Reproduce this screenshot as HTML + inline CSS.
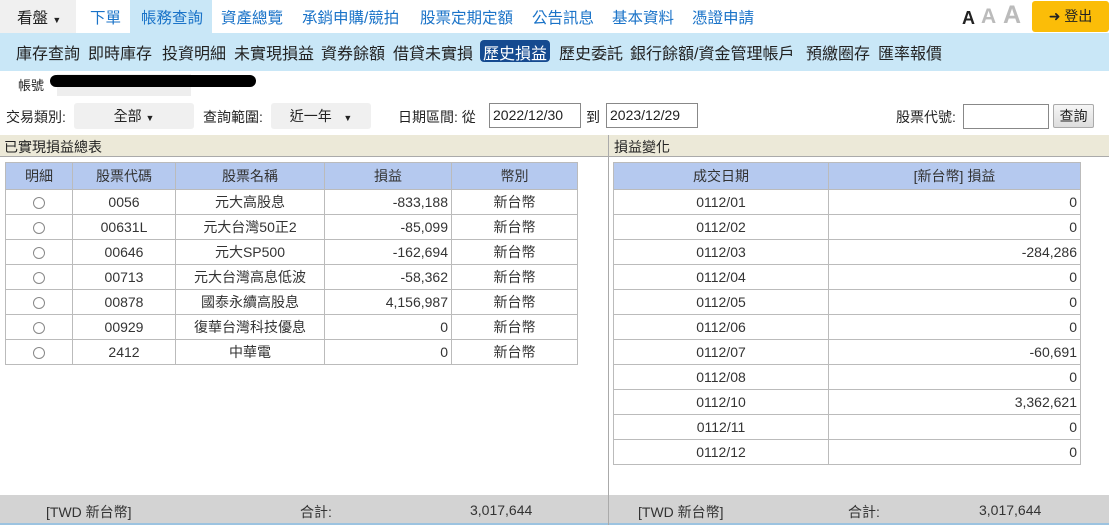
<!DOCTYPE html>
<html><head><meta charset="utf-8"><style>
*{box-sizing:border-box;margin:0;padding:0}
body{width:1109px;height:527px;overflow:hidden;background:#fff;font-family:"Liberation Sans","Noto Sans CJK TC",sans-serif;font-size:14px;color:#222;position:relative}
.a{position:absolute;white-space:nowrap}
.n{position:absolute;top:6px;font-size:15.5px;color:#1a73c8;white-space:nowrap}
.s{position:absolute;top:40px;font-size:16px;color:#222;white-space:nowrap}
table{border-collapse:collapse;position:absolute;font-size:14px;color:#333}
td,th{border:1px solid #bbb;height:25px;padding:0 3px;text-align:center;font-weight:normal}
th{background:#b5c9ef;color:#333;height:27px}
td.r{text-align:right}
.sel{background:#f0f0f0;border-radius:3px;height:26px;text-align:center;line-height:26px}
.inp{border:1px solid #888;height:25px;background:#fff;padding:0 3px;line-height:23px;font-size:14px}
.rad{display:inline-block;width:12px;height:12px;border:1px solid #888;border-radius:50%;vertical-align:middle}
</style></head><body>
<div class="a" style="left:0;top:0;width:76px;height:33px;background:#f0f0f0"></div>
<div class="a" style="left:130px;top:0;width:82px;height:33px;background:#c9e7f7"></div>
<div class="a" style="left:17px;top:6px;font-size:15.5px">看盤 <span style="font-size:9px">▼</span></div>
<div class="n" style="left:90px">下單</div>
<div class="n" style="left:141px">帳務查詢</div>
<div class="n" style="left:221px">資產總覽</div>
<div class="n" style="left:302px">承銷申購/競拍</div>
<div class="n" style="left:420px">股票定期定額</div>
<div class="n" style="left:532px">公告訊息</div>
<div class="n" style="left:612px">基本資料</div>
<div class="n" style="left:692px">憑證申請</div>
<div class="a" style="left:962px;top:8px;font-weight:bold;font-size:18px">A</div>
<div class="a" style="left:981px;top:5px;font-weight:bold;font-size:21px;color:#bbb">A</div>
<div class="a" style="left:1003px;top:1px;font-weight:bold;font-size:25px;color:#bbb">A</div>
<div class="a" style="left:1032px;top:1px;width:77px;height:31px;background:#fbbd08;border-radius:3px;text-align:center;line-height:31px;font-size:14px">➜ 登出</div>
<div class="a" style="left:0;top:33px;width:1109px;height:38px;background:#c9e7f7"></div>
<div class="s" style="left:16px">庫存查詢</div>
<div class="s" style="left:88px">即時庫存</div>
<div class="s" style="left:162px">投資明細</div>
<div class="s" style="left:234px">未實現損益</div>
<div class="s" style="left:321px">資券餘額</div>
<div class="s" style="left:393px">借貸未實損</div>
<div class="a" style="left:480px;top:40px;width:70px;height:22px;background:#154a90;border-radius:4px"></div>
<div class="s" style="left:483px;color:#fff">歷史損益</div>
<div class="s" style="left:559px">歷史委託</div>
<div class="s" style="left:630px">銀行餘額/資金管理帳戶</div>
<div class="s" style="left:806px">預繳圈存</div>
<div class="s" style="left:878px">匯率報價</div>
<div class="a" style="left:57px;top:74px;width:134px;height:22px;background:#eee"></div>
<div class="a" style="left:18px;top:75px;font-size:13px">帳號</div>
<div class="a" style="left:50px;top:75px;width:206px;height:12px;background:#000;border-radius:6px"></div>
<div class="a" style="left:6px;top:107px">交易類別:</div>
<div class="a sel" style="left:74px;top:103px;width:120px">全部 <span style="font-size:9px">▼</span></div>
<div class="a" style="left:203px;top:107px">查詢範圍:</div>
<div class="a sel" style="left:271px;top:103px;width:100px">近一年 &nbsp;&nbsp;<span style="font-size:9px">▼</span></div>
<div class="a" style="left:398px;top:107px">日期區間: 從</div>
<div class="a inp" style="left:489px;top:103px;width:92px;overflow:hidden">2022/12/30</div>
<div class="a" style="left:586px;top:107px">到</div>
<div class="a inp" style="left:606px;top:103px;width:92px;overflow:hidden">2023/12/29</div>
<div class="a" style="left:896px;top:107px">股票代號:</div>
<div class="a inp" style="left:963px;top:104px;width:86px"></div>
<div class="a" style="left:1053px;top:104px;width:41px;height:24px;border:1px solid #aaa;background:linear-gradient(#f6f6f6,#ddd);border-radius:2px;text-align:center;line-height:22px">查詢</div>
<div class="a" style="left:0;top:135px;width:1109px;height:22px;background:#ece9d8;border-bottom:1px solid #aaa"></div>
<div class="a" style="left:4px;top:137px">已實現損益總表</div>
<div class="a" style="left:614px;top:137px">損益變化</div>
<div class="a" style="left:608px;top:135px;width:1px;height:390px;background:#aaa"></div>
<table style="left:5px;top:162px;width:573px">
<tr><th style="width:67px">明細</th><th style="width:103px">股票代碼</th><th style="width:149px">股票名稱</th><th style="width:127px">損益</th><th>幣別</th></tr>
<tr><td><span class="rad"></span></td><td>0056</td><td>元大高股息</td><td class="r">-833,188</td><td>新台幣</td></tr>
<tr><td><span class="rad"></span></td><td>00631L</td><td>元大台灣50正2</td><td class="r">-85,099</td><td>新台幣</td></tr>
<tr><td><span class="rad"></span></td><td>00646</td><td>元大SP500</td><td class="r">-162,694</td><td>新台幣</td></tr>
<tr><td><span class="rad"></span></td><td>00713</td><td>元大台灣高息低波</td><td class="r">-58,362</td><td>新台幣</td></tr>
<tr><td><span class="rad"></span></td><td>00878</td><td>國泰永續高股息</td><td class="r">4,156,987</td><td>新台幣</td></tr>
<tr><td><span class="rad"></span></td><td>00929</td><td>復華台灣科技優息</td><td class="r">0</td><td>新台幣</td></tr>
<tr><td><span class="rad"></span></td><td>2412</td><td>中華電</td><td class="r">0</td><td>新台幣</td></tr>
</table>
<table style="left:613px;top:162px;width:468px">
<tr><th style="width:215px">成交日期</th><th>[新台幣] 損益</th></tr>
<tr><td>0112/01</td><td class="r">0</td></tr>
<tr><td>0112/02</td><td class="r">0</td></tr>
<tr><td>0112/03</td><td class="r">-284,286</td></tr>
<tr><td>0112/04</td><td class="r">0</td></tr>
<tr><td>0112/05</td><td class="r">0</td></tr>
<tr><td>0112/06</td><td class="r">0</td></tr>
<tr><td>0112/07</td><td class="r">-60,691</td></tr>
<tr><td>0112/08</td><td class="r">0</td></tr>
<tr><td>0112/10</td><td class="r">3,362,621</td></tr>
<tr><td>0112/11</td><td class="r">0</td></tr>
<tr><td>0112/12</td><td class="r">0</td></tr>
</table>
<div class="a" style="left:0;top:495px;width:1109px;height:30px;background:#d3d3d3;border-bottom:2px solid #9cc3e0"></div>
<div class="a" style="left:608px;top:495px;width:1px;height:30px;background:#aaa"></div>
<div class="a" style="left:46px;top:502px;color:#333">[TWD 新台幣]</div>
<div class="a" style="left:300px;top:502px;color:#333">合計:</div>
<div class="a" style="left:470px;top:502px;color:#333">3,017,644</div>
<div class="a" style="left:638px;top:502px;color:#333">[TWD 新台幣]</div>
<div class="a" style="left:848px;top:502px;color:#333">合計:</div>
<div class="a" style="left:979px;top:502px;color:#333">3,017,644</div>
</body></html>
